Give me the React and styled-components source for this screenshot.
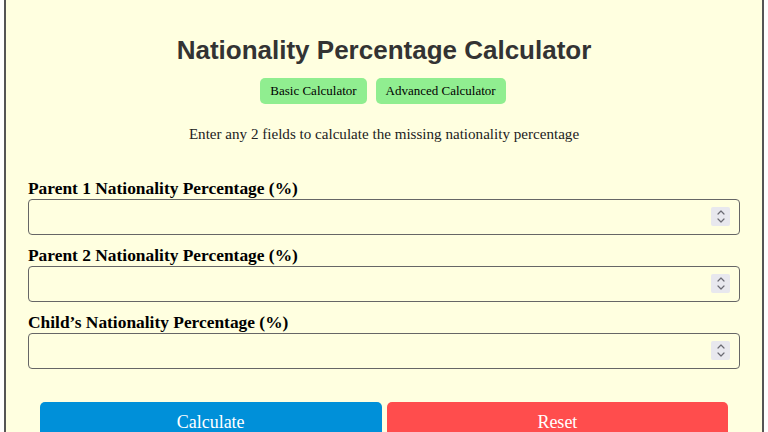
import { useState } from "react";
import styled, { createGlobalStyle } from "styled-components";

const GlobalStyle = createGlobalStyle`
  body {
    margin: 0;
    background: #ffffff;
    font-family: "Liberation Serif", "Times New Roman", serif;
  }
`;

const Container = styled.div`
  box-sizing: border-box;
  width: 760px;
  margin: 0 auto;
  padding: 34px 22px 40px;
  background: #ffffe0;
  border: 2px solid #555;
  border-top: none;
`;

const Title = styled.h1`
  margin: 0;
  text-align: center;
  font-family: "Liberation Sans", Arial, sans-serif;
  font-size: 26px;
  line-height: 32px;
  color: #333;
`;

const Switcher = styled.div`
  display: flex;
  justify-content: center;
  gap: 9px;
  margin-top: 12px;
  padding-right: 2px;
`;

const ModeButton = styled.button`
  height: 26px;
  padding: 0 10px;
  border: none;
  border-radius: 5px;
  background: #90ee90;
  color: #000;
  font-family: "Liberation Serif", "Times New Roman", serif;
  font-size: 13px;
  cursor: pointer;
`;

const Hint = styled.p`
  margin: 20px 0 0;
  text-align: center;
  font-size: 15.1px;
  line-height: 20px;
  color: #222;
`;

const Form = styled.div`
  margin-top: 34px;
`;

const Field = styled.div`
  margin-bottom: 10px;
`;

const Label = styled.label`
  display: block;
  font-weight: bold;
  font-size: 17.4px;
  line-height: 20px;
  color: #000;
  margin-bottom: 1px;
`;

const InputWrap = styled.div`
  position: relative;
`;

const Input = styled.input`
  display: block;
  box-sizing: border-box;
  width: 100%;
  height: 36px;
  padding: 0 36px 0 8px;
  border: 1px solid #666;
  border-radius: 4px;
  background: transparent;
  font-size: 16px;
  -moz-appearance: textfield;

  &::-webkit-inner-spin-button,
  &::-webkit-outer-spin-button {
    -webkit-appearance: none;
    margin: 0;
  }
`;

const Spinner = styled.span`
  position: absolute;
  top: 8px;
  right: 10px;
  width: 19px;
  height: 19px;
  display: flex;
  align-items: center;
  justify-content: center;
  background: #e8e8ee;
  border-radius: 2px;
  pointer-events: none;
`;

const Actions = styled.div`
  display: flex;
  justify-content: center;
  gap: 5px;
  margin-top: 33px;
`;

const ActionButton = styled.button`
  width: 48%;
  height: 40px;
  border: none;
  border-radius: 5px;
  background: ${(p) => (p.$variant === "reset" ? "#ff4d4d" : "#0090d9")};
  color: #fff;
  font-family: "Liberation Serif", "Times New Roman", serif;
  font-size: 18px;
  cursor: pointer;
`;

const fields = [
  "Parent 1 Nationality Percentage (%)",
  "Parent 2 Nationality Percentage (%)",
  "Child\u2019s Nationality Percentage (%)",
];

function SpinIcon() {
  return (
    <svg width="10" height="15" viewBox="0 0 10 15" fill="none" stroke="#6b6b73" strokeWidth="1.2" strokeLinecap="round" strokeLinejoin="round">
      <path d="M2 5 L5 2 L8 5" />
      <path d="M2 10 L5 13 L8 10" />
    </svg>
  );
}

export default function App() {
  const [values, setValues] = useState(["", "", ""]);

  return (
    <>
      <GlobalStyle />
      <Container>
        <Title>Nationality Percentage Calculator</Title>
        <Switcher>
          <ModeButton>Basic Calculator</ModeButton>
          <ModeButton>Advanced Calculator</ModeButton>
        </Switcher>
        <Hint>Enter any 2 fields to calculate the missing nationality percentage</Hint>
        <Form>
          {fields.map((label, i) => (
            <Field key={label}>
              <Label>{label}</Label>
              <InputWrap>
                <Input
                  type="number"
                  value={values[i]}
                  onChange={(e) => {
                    const next = [...values];
                    next[i] = e.target.value;
                    setValues(next);
                  }}
                />
                <Spinner>
                  <SpinIcon />
                </Spinner>
              </InputWrap>
            </Field>
          ))}
        </Form>
        <Actions>
          <ActionButton>Calculate</ActionButton>
          <ActionButton $variant="reset" onClick={() => setValues(["", "", ""])}>
            Reset
          </ActionButton>
        </Actions>
      </Container>
    </>
  );
}
